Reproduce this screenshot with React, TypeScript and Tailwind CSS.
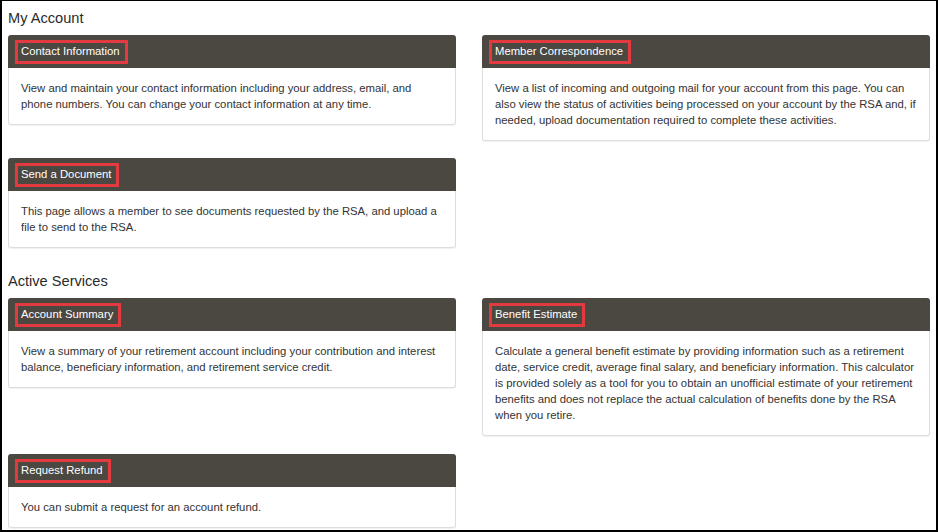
type CardProps = {
  title: string;
  children: React.ReactNode;
};

const Card = ({ title, children }: CardProps) => {
  return (
    <div className="rounded-[3px] shadow-[0_1px_1px_rgba(0,0,0,0.06)]">
      <div className="flex h-[33px] items-center rounded-t-[3px] bg-[#4b4741] pl-[7px]">
        <span className="flex h-[24px] items-center border-[3px] border-[#e23a3f] pl-[3px] pr-[5px] text-[11.3px] leading-none text-white">
          {title}
        </span>
      </div>
      <div className="rounded-b-[3px] border border-t-0 border-[#dedede] bg-white px-[12px] py-[12px] text-[11.3px] leading-[16px] text-[#333]">
        {children}
      </div>
    </div>
  );
};

const SectionTitle = ({ children }: { children: React.ReactNode }) => (
  <h2 className="mb-[9px] text-[14.6px] leading-[16px] text-[#2a2a2a]">{children}</h2>
);

export default function App() {
  return (
    <div
      className="h-[532px] w-[938px] overflow-hidden border-t border-l-2 border-r-2 border-b-2 border-black bg-white px-[6px] pt-[9px]"
      style={{ fontFamily: '"Liberation Sans", Arial, sans-serif' }}
    >
      <SectionTitle>My Account</SectionTitle>
      <div className="grid grid-cols-[448px_448px] items-start gap-x-[26px] gap-y-[17px]">
        <Card title="Contact Information">
          View and maintain your contact information including your address, email, and
          phone numbers. You can change your contact information at any time.
        </Card>
        <Card title="Member Correspondence">
          View a list of incoming and outgoing mail for your account from this page. You can
          also view the status of activities being processed on your account by the RSA and, if
          needed, upload documentation required to complete these activities.
        </Card>
        <Card title="Send a Document">
          This page allows a member to see documents requested by the RSA, and upload a file
          to send to the RSA.
        </Card>
      </div>

      <div className="mt-[25px]">
        <SectionTitle>Active Services</SectionTitle>
      </div>
      <div className="grid grid-cols-[448px_448px] items-start gap-x-[26px] gap-y-[18px]">
        <Card title="Account Summary">
          View a summary of your retirement account including your contribution and interest
          balance, beneficiary information, and retirement service credit.
        </Card>
        <Card title="Benefit Estimate">
          Calculate a general benefit estimate by providing information such as a retirement
          date, service credit, average final salary, and beneficiary information. This
          calculator is provided solely as a tool for you to obtain an unofficial estimate of
          your retirement benefits and does not replace the actual calculation of benefits done
          by the RSA when you retire.
        </Card>
        <Card title="Request Refund">You can submit a request for an account refund.</Card>
      </div>
    </div>
  );
}
